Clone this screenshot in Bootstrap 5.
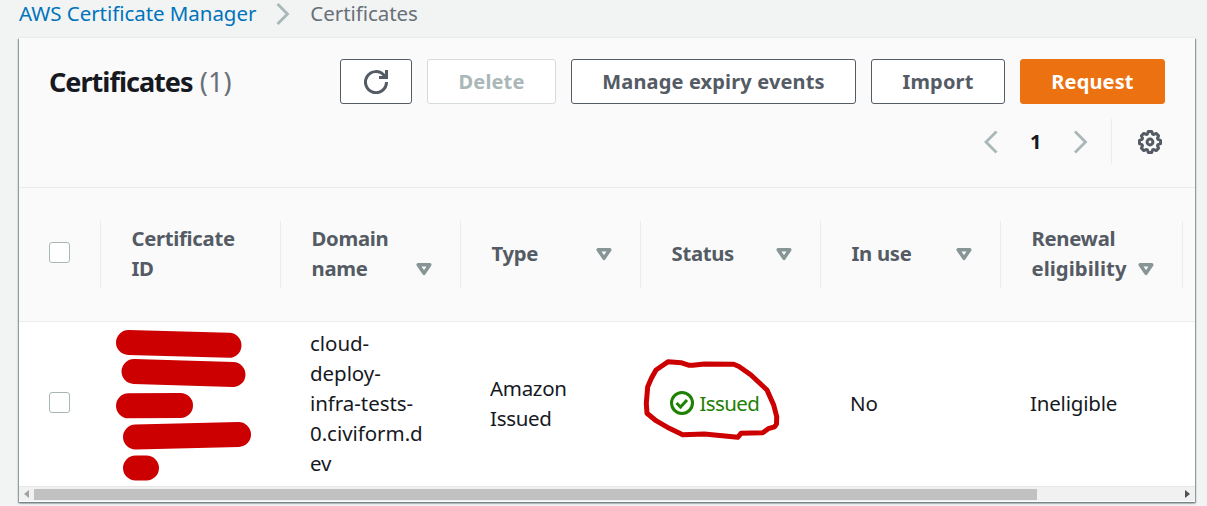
<!DOCTYPE html>
<html lang="en">
<head>
<meta charset="utf-8">
<title>Certificates</title>
<meta name="viewport" content="width=device-width, initial-scale=1">
<link href="https://cdn.jsdelivr.net/npm/bootstrap@5.3.0/dist/css/bootstrap.min.css" rel="stylesheet">
<style>
  body { background: #f2f3f3; color: #16191f; font: 20.5px/30px "Noto Sans", "Open Sans", sans-serif; letter-spacing: -.2px; height: 506px; overflow: hidden; }
  .crumbs { height: 38px; padding-left: 19px; line-height: 26px; letter-spacing: -.05px; }
  .crumbs a { color: #0073bb; }
  .crumbs svg { margin: 0 20px; }
  .crumbs .current { color: #687078; }
  .panel { width: 1176px; height: 464px; margin-left: 19px; background: #fff; box-shadow: 0 1px 2px 0 #5f6b6d, 1px 1px 1px #aab7b8, -1px 1px 1px #aab7b8; }
  .panel-head { height: 149px; background: #fafafa; padding: 21px 30px 0; box-shadow: 0 -1px 0 #eaeded; }
  .panel-head h1 { font-size: 27px; height: 45px; line-height: 46px; font-weight: 700; letter-spacing: -.98px; }
  .panel-head h1 span { font-weight: 400; color: #687078; letter-spacing: .2px; margin-left: 1px; }
  .act { height: 45px; border: 1px solid #545b64; border-radius: 3px; background: #fff; color: #545b64; font-weight: 700; font-size: 20px; line-height: 43px; padding: 0; letter-spacing: .15px; }
  .act:disabled { background: #fff; border-color: #d5dbdb; color: #aab7b8; opacity: 1; }
  .act.main { background: #ec7211; border-color: #ec7211; color: #fff; }
  .w-refresh { width: 72px; } .w-delete { width: 129px; } .w-manage { width: 285px; } .w-import { width: 134px; } .w-request { width: 145px; }
  .pager { height: 45px; margin-top: 15px; padding-right: 3px; }
  .pager .num { font-weight: 700; width: 76px; text-align: center; font-size: 20px; padding-right: 1px; }
  .pager .rule { width: 1px; height: 45px; background: #eaeded; margin: 0 26px 0 23px; }
  .certs { width: 1176px; table-layout: fixed; border-collapse: separate; border-spacing: 0; }
  .certs th { height: 135px; background: #fafafa; border: solid #eaeded; border-width: 1px 0; padding: 0; color: #545b64; font-weight: 700; font-size: 20.3px; letter-spacing: -.3px; vertical-align: middle; }
  .th-in { height: 67px; border-right: 1px solid #eaeded; padding: 0 28px 3px 30.5px; }
  .th-in svg { flex: none; margin-top: 2px; }
  .th-in .sort-low { margin-top: 32px; }
  .wide { letter-spacing: .05px; }
  .certs td { height: 164px; padding: 0 29px 2px; vertical-align: middle; }
  .certs .domain { letter-spacing: -.05px; }
  .certs .type { letter-spacing: -.3px; }
  .box { display: block; width: 21px; height: 21px; border: 1.5px solid #aab7b8; border-radius: 3px; background: #fff; margin-left: 30px; }
  .certs td .box { margin-bottom: 3px; }
  .th-in .box { margin-bottom: 5px; }
  .ok { color: #1d8102; letter-spacing: -.6px; }
  .ring { left: 0; top: 31px; }
  .hbar { height: 15px; background: #f1f1f1; border-top: 1px solid #e6e6e6; padding: 0 5px; }
  .hbar .thumb { width: 1003px; height: 11px; background: #c1c1c1; margin-left: 5px; }
</style>
</head>
<body>
<nav class="crumbs d-flex">
  <a href="#" class="text-decoration-none">AWS Certificate Manager</a>
  <svg width="14" height="28" fill="none" stroke="#aab7b8" stroke-width="2.8"><path d="M1.500 4l10 10-10 10"/></svg>
  <span class="current">Certificates</span>
</nav>
<main class="panel">
  <header class="panel-head">
    <div class="d-flex justify-content-between">
      <h1 class="m-0">Certificates <span>(1)</span></h1>
      <div class="d-flex" style="gap:15px">
        <button class="btn act w-refresh d-flex align-items-center justify-content-center" aria-label="Refresh"><svg width="24" height="24" viewBox="0 0 24 24" fill="none" stroke="#545b64" stroke-width="3"><path d="M22.500 12A10.500 10.500 0 1 1 20 5.300L22 7.500M22.500 0V7.500H15"/></svg></button>
        <button class="btn act w-delete" disabled>Delete</button>
        <button class="btn act w-manage">Manage expiry events</button>
        <button class="btn act w-import">Import</button>
        <button class="btn act main w-request">Request</button>
      </div>
    </div>
    <div class="pager d-flex justify-content-end align-items-center">
      <svg width="14" height="24" fill="none" stroke="#aab7b8" stroke-width="2.800"><path d="M12.500 1.500L2 12l10.500 10.500"/></svg>
      <span class="num">1</span>
      <svg width="14" height="24" fill="none" stroke="#aab7b8" stroke-width="2.800"><path d="M1 1.500L11.500 12 1 22.500"/></svg>
      <span class="rule"></span>
      <svg width="24" height="24" viewBox="0 0 24 24" fill="none" stroke="#545b64" stroke-width="3" stroke-linejoin="round"><path d="M10.300 1.500h3.400l.9 2.500 1.200.5 2.400-1.100 2.400 2.400-1.100 2.400.5 1.200 2.500.9v3.400l-2.500.9-.5 1.200 1.100 2.400-2.400 2.400-2.400-1.100-1.200.5-.9 2.500h-3.400l-.9-2.500-1.200-.5-2.400 1.100-2.400-2.400 1.100-2.400-.5-1.200-2.500-.9v-3.400l2.500-.9.5-1.200-1.100-2.400 2.400-2.400 2.400 1.100 1.200-.5z"/><circle cx="12" cy="12" r="2.900"/></svg>
    </div>
  </header>
  <table class="certs">
    <colgroup><col style="width:82px"><col style="width:180px"><col style="width:180px"><col style="width:180px"><col style="width:180px"><col style="width:180px"><col style="width:182px"><col></colgroup>
    <thead><tr>
      <th><div class="th-in d-flex align-items-center p-0"><span class="box"></span></div></th>
      <th><div class="th-in d-flex align-items-center">Certificate<br>ID</div></th>
      <th><div class="th-in d-flex align-items-center justify-content-between"><span>Domain<br>name</span><svg class="sort-low" width="16" height="14" fill="none" stroke="#879596" stroke-width="3.500" stroke-linejoin="round"><path d="M2.200 2.700h11.600L8 11.300z"/></svg></div></th>
      <th><div class="th-in d-flex align-items-center justify-content-between">Type<svg width="16" height="14" fill="none" stroke="#879596" stroke-width="3.500" stroke-linejoin="round"><path d="M2.200 2.700h11.600L8 11.300z"/></svg></div></th>
      <th><div class="th-in d-flex align-items-center justify-content-between">Status<svg width="16" height="14" fill="none" stroke="#879596" stroke-width="3.500" stroke-linejoin="round"><path d="M2.200 2.700h11.600L8 11.300z"/></svg></div></th>
      <th><div class="th-in d-flex align-items-center justify-content-between">In use<svg width="16" height="14" fill="none" stroke="#879596" stroke-width="3.500" stroke-linejoin="round"><path d="M2.200 2.700h11.600L8 11.300z"/></svg></div></th>
      <th><div class="th-in d-flex align-items-center justify-content-between"><span>Renewal<br><span class="wide">eligibility</span></span><svg class="sort-low" width="16" height="14" fill="none" stroke="#879596" stroke-width="3.500" stroke-linejoin="round"><path d="M2.200 2.700h11.600L8 11.300z"/></svg></div></th>
      <th></th>
    </tr></thead>
    <tbody><tr>
      <td class="p-0"><span class="box"></span></td>
      <td class="p-0"><svg class="d-block" width="180" height="164" fill="none" stroke="#c00" stroke-width="25" stroke-linecap="round"><path d="M27.500 20.500L128 23.300M33 49.500l99 3M27.500 83.800L79.500 83.500M34.500 115l103-2.500M34.500 146h11"/></svg></td>
      <td class="domain">cloud-<br>deploy-<br>infra-tests-<br>0.civiform.d<br>ev</td>
      <td class="type">Amazon<br>Issued</td>
      <td class="position-relative"><span class="ok d-flex align-items-center"><svg class="me-1" width="25.500" height="24" fill="none" stroke="#1d8102" stroke-width="3"><circle cx="12" cy="12" r="10.500"/><path d="M6.500 12l4 4 6.500-7"/></svg>Issued</span>
        <svg class="ring position-absolute" width="150" height="92" fill="none" stroke="#c00" stroke-width="5" stroke-linejoin="round" stroke-linecap="round"><path d="M51.700 12.300h-3.500L40 9.700 27.300 8.700 23 11.500 15 17 10.500 25 6.700 33.700 5.300 50.300 6 60.300 15 67.700 28.300 75.300 41.700 81.700 63.300 81 96.700 84.300 100 80.300 121.700 79.700 127.300 75.700 133.500 73.800 135.500 71 135.700 63.700 132.700 52 126 37 110 22 98 13.500 92.700 11.300 63.300 11z"/></svg></td>
      <td>No</td>
      <td>Ineligible</td>
      <td class="p-0"></td>
    </tr></tbody>
  </table>
  <div class="hbar d-flex align-items-center">
    <svg width="5" height="8" fill="#a3a3a3"><path d="M5 0v8L0 4z"/></svg>
    <span class="thumb"></span>
    <svg class="ms-auto" width="5" height="8" fill="#505050"><path d="M0 0v8l5-4z"/></svg>
  </div>
</main>
</body>
</html>
